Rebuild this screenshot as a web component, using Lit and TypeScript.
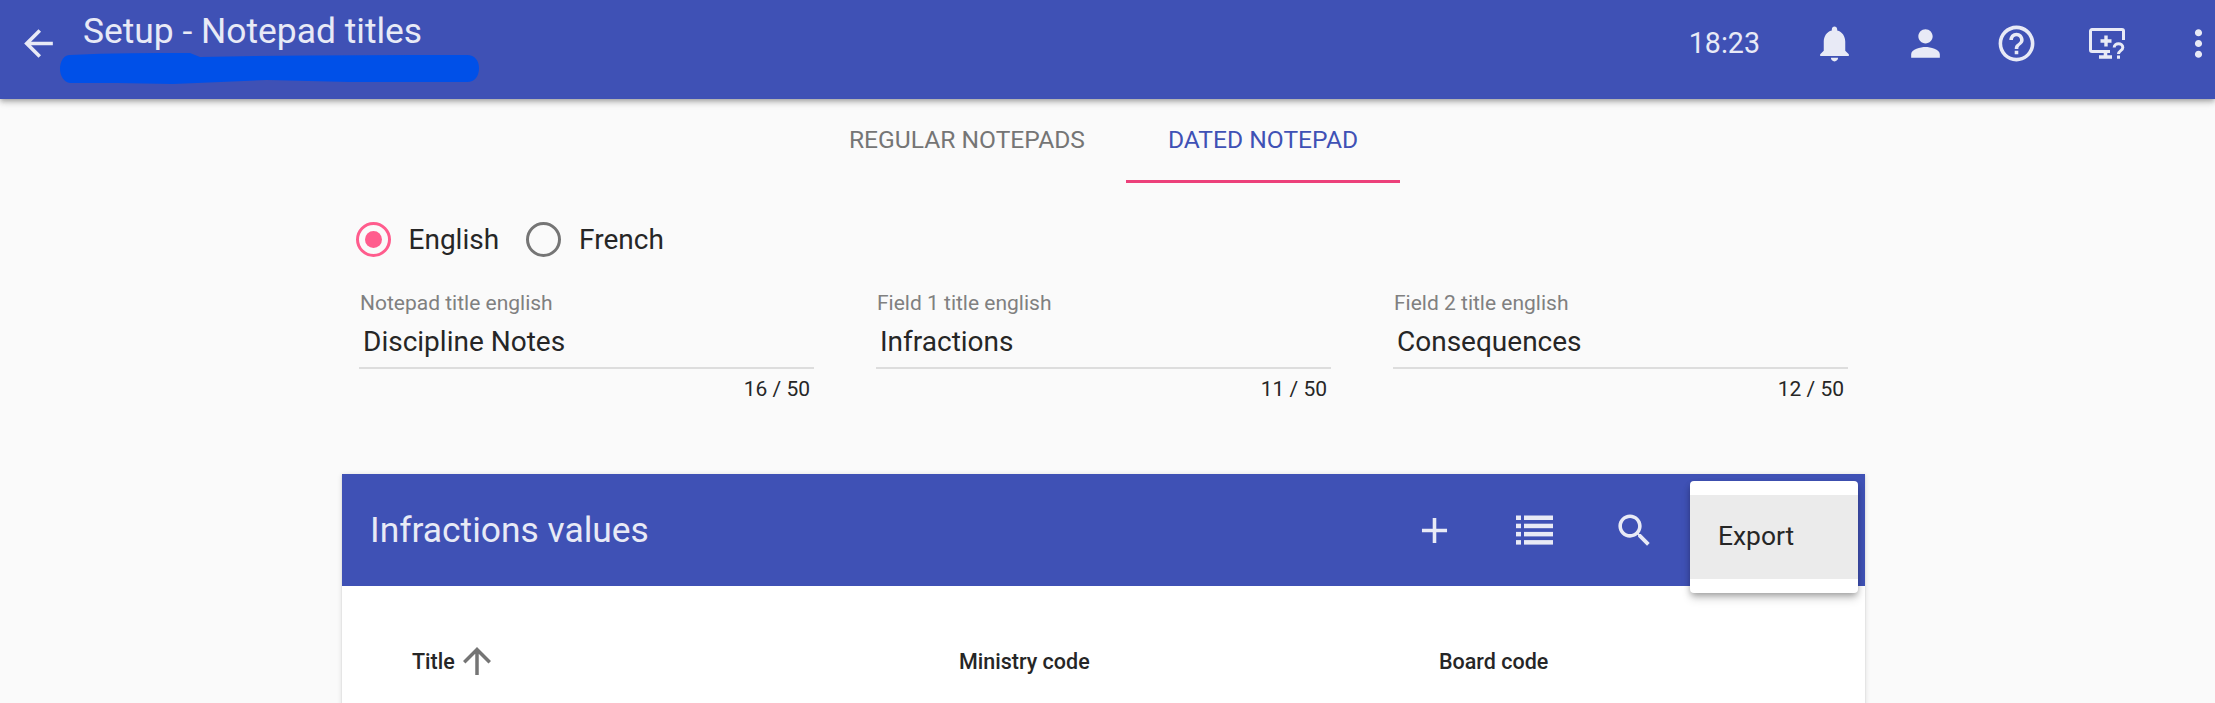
import { css, html, LitElement, svg } from "lit";
import { customElement } from "lit/decorators.js";

const icon = (d: string, cls = "icon") =>
  html`<svg class=${cls} viewBox="0 0 24 24"><path d=${d} fill="currentColor"></path></svg>`;

const ICONS = {
  back: "M20 11H7.83l5.59-5.59L12 4l-8 8 8 8 1.41-1.41L7.83 13H20v-2z",
  bell: "M12 22c1.1 0 2-.9 2-2h-4c0 1.1.9 2 2 2zm6-6v-5c0-3.07-1.63-5.64-4.5-6.32V4c0-.83-.67-1.5-1.5-1.5s-1.5.67-1.5 1.5v.68C7.64 5.36 6 7.92 6 11v5l-2 2v1h16v-1l-2-2z",
  person:
    "M12 12c2.21 0 4-1.79 4-4s-1.79-4-4-4-4 1.79-4 4 1.79 4 4 4zm0 2c-2.67 0-8 1.34-8 4v2h16v-2c0-2.66-5.33-4-8-4z",
  help: "M11 18h2v-2h-2v2zm1-16C6.48 2 2 6.48 2 12s4.48 10 10 10 10-4.48 10-10S17.52 2 12 2zm0 18c-4.41 0-8-3.59-8-8s3.59-8 8-8 8 3.59 8 8-3.59 8-8 8zm0-14c-2.21 0-4 1.79-4 4h2c0-1.1.9-2 2-2s2 .9 2 2c0 2-3 1.75-3 5h2c0-2.25 3-2.5 3-5 0-2.21-1.79-4-4-4z",
  more: "M12 8c1.1 0 2-.9 2-2s-.9-2-2-2-2 .9-2 2 .9 2 2 2zm0 2c-1.1 0-2 .9-2 2s.9 2 2 2 2-.9 2-2-.9-2-2-2zm0 6c-1.1 0-2 .9-2 2s.9 2 2 2 2-.9 2-2-.9-2-2-2z",
  add: "M19 13h-6v6h-2v-6H5v-2h6V5h2v6h6v2z",
  search:
    "M15.5 14h-.79l-.28-.27C15.41 12.59 16 11.11 16 9.5 16 5.91 13.09 3 9.5 3S3 5.91 3 9.5 5.91 16 9.5 16c1.61 0 3.09-.59 4.23-1.57l.27.28v.79l5 4.99L20.49 19l-4.99-5zm-6 0C7.01 14 5 11.99 5 9.5S7.01 5 9.5 5 14 7.01 14 9.5 11.99 14 9.5 14z",
  up: "M4 12l1.41 1.41L11 7.83V20h2V7.83l5.58 5.59L20 12l-8-8-8 8z",
};

const FIELDS = [
  { label: "Notepad title english", value: "Discipline Notes", count: "16 / 50" },
  { label: "Field 1 title english", value: "Infractions", count: "11 / 50" },
  { label: "Field 2 title english", value: "Consequences", count: "12 / 50" },
];

@customElement("app-root")
class AppRoot extends LitElement {
  protected render() {
    return html`
      <header class="appbar">
        ${icon(ICONS.back, "icon back")}
        <h1 class="title">Setup - Notepad titles</h1>
        <svg class="scribble" viewBox="60 53 420 31">
          <path
            d="M70 55C110 53 150 53 190 53L200 57C290 55 380 55 467 55C475 55 479 61 479 68C479 76 475 82 467 82L350 82L267 80L173 84L117 83L70 83C64 82 60 76 60 69C60 61 64 55 70 55Z"
            fill="#0050e8"
          ></path>
        </svg>
        <span class="time">18:23</span>
        <div class="actions">
          ${icon(ICONS.bell)} ${icon(ICONS.person)} ${icon(ICONS.help)}
          <svg class="monitor" viewBox="0 0 36 31" fill="none" stroke="currentColor">
            ${svg`<path d="M21 23.5H3a1.5 1.5 0 0 1-1.5-1.5V3A1.5 1.5 0 0 1 3 1.5h30A1.5 1.5 0 0 1 34.5 3v9" stroke-width="3"></path>
            <path d="M17 7.5v11M11.5 13h11" stroke-width="3.4"></path>
            <path d="M16.5 24v4M10 29h13" stroke-width="3.6"></path>
            <path d="M25.2 19.5c0-5 8.6-5 8.6 0 0 3.3-4.3 3-4.3 6.6M29.5 27.5v3.3" stroke-width="3"></path>`}
          </svg>
          ${icon(ICONS.more)}
        </div>
      </header>

      <main class="page">
        <nav class="tabs">
          <span class="tab">REGULAR NOTEPADS</span>
          <span class="tab active">DATED NOTEPAD</span>
        </nav>

        <section class="form">
          <div class="radios">
            <span class="radio on"><i></i></span><span class="radio-label">English</span>
            <span class="radio"><i></i></span><span class="radio-label">French</span>
          </div>
          <div class="fields">
            ${FIELDS.map(
              (f) => html`<div class="field">
                <label>${f.label}</label>
                <div class="value">${f.value}</div>
                <div class="count">${f.count}</div>
              </div>`
            )}
          </div>
        </section>

        <section class="card">
          <div class="toolbar">
            <h2>Infractions values</h2>
            <div class="tools">
              ${icon(ICONS.add, "icon")}
              <svg class="icon" viewBox="-3 -6.5 43 43" fill="currentColor">
                ${svg`<rect x="0" y="0" width="5" height="4.5"></rect>
                <rect x="8" y="0" width="29" height="4.5"></rect>
                <rect x="0" y="8.2" width="5" height="4.5"></rect>
                <rect x="8" y="8.2" width="29" height="4.5"></rect>
                <rect x="0" y="16.4" width="5" height="4.5"></rect>
                <rect x="8" y="16.4" width="29" height="4.5"></rect>
                <rect x="0" y="24.6" width="5" height="4.5"></rect>
                <rect x="8" y="24.6" width="29" height="4.5"></rect>`}
              </svg>
              ${icon(ICONS.search, "icon")}
            </div>
            <div class="menu"><div class="menu-item">Export</div></div>
          </div>
          <div class="thead">
            <span class="th first">Title ${icon(ICONS.up, "sort")}</span>
            <span class="th second">Ministry code</span>
            <span class="th third">Board code</span>
          </div>
        </section>
      </main>
    `;
  }

  static styles = css`
    :host {
      display: block;
      height: 703px;
      overflow: hidden;
      background: #fafafa;
      font-family: Roboto, sans-serif;
      color: #262626;
    }

    .appbar {
      position: relative;
      z-index: 2;
      display: flex;
      align-items: flex-start;
      height: 99px;
      padding-left: 17px;
      background: #3f51b5;
      color: #e8eaf6;
      box-shadow: 0 2px 4px -1px rgba(0, 0, 0, 0.2), 0 4px 5px rgba(0, 0, 0, 0.14),
        0 1px 10px rgba(0, 0, 0, 0.12);
    }

    .icon {
      width: 43px;
      height: 43px;
      display: block;
      flex: none;
    }

    .back {
      margin-top: 22px;
    }

    .title {
      margin: 10px 0 0 23px;
      font-size: 35.4px;
      line-height: 42px;
      font-weight: 400;
      white-space: nowrap;
    }

    .scribble {
      position: absolute;
      left: 60px;
      top: 53px;
      width: 420px;
      height: 31px;
    }

    .time {
      margin-left: auto;
      margin-top: 26px;
      font-size: 28.6px;
      line-height: 34px;
    }

    .actions {
      display: grid;
      grid-template-columns: repeat(5, 43px);
      column-gap: 48px;
      justify-items: center;
      align-items: center;
      margin: 22px -4.5px 0 52.5px;
    }

    .monitor {
      width: 36px;
      height: 31px;
      display: block;
    }

    .page {
      padding: 0 350px 0 342px;
    }

    .tabs {
      display: flex;
      justify-content: center;
    }

    .tab {
      height: 84px;
      box-sizing: border-box;
      padding: 0 41.5px;
      display: flex;
      align-items: center;
      font-size: 24.6px;
      color: #757575;
      border-bottom: 3px solid transparent;
    }

    .tab.active {
      color: #3f51b5;
      border-bottom-color: #ec407a;
    }

    .form {
      padding: 0 17px;
    }

    .radios {
      display: flex;
      align-items: center;
      margin: 38px 0 0 -3.5px;
      height: 36px;
    }

    .radio {
      width: 35px;
      height: 35px;
      box-sizing: border-box;
      border: 3px solid #757575;
      border-radius: 50%;
      display: flex;
      align-items: center;
      justify-content: center;
      flex: none;
    }

    .radio.on {
      border-color: #ff5c8d;
    }

    .radio.on i {
      width: 17px;
      height: 17px;
      border-radius: 50%;
      background: #ff5c8d;
    }

    .radio-label {
      font-size: 28px;
      margin: 0 27px 0 18px;
    }

    .fields {
      display: grid;
      grid-template-columns: repeat(3, 455px);
      column-gap: 62px;
      margin-top: 34px;
    }

    .field {
      display: flex;
      flex-direction: column;
    }

    .field label {
      font-size: 21px;
      line-height: 24px;
      color: #808080;
      padding-left: 1px;
    }

    .value {
      font-size: 28px;
      line-height: 34px;
      padding: 10px 0 8px 4px;
      border-bottom: 2px solid #ddd;
    }

    .count {
      font-size: 21px;
      line-height: 24px;
      text-align: right;
      padding: 8px 4px 0 0;
    }

    .card {
      margin-top: 73px;
      background: #fff;
      height: 260px;
      box-shadow: 0 2px 1px -1px rgba(0, 0, 0, 0.2), 0 1px 1px rgba(0, 0, 0, 0.14),
        0 1px 5px rgba(0, 0, 0, 0.14);
    }

    .toolbar {
      position: relative;
      display: flex;
      align-items: center;
      height: 112px;
      padding-left: 28px;
      background: #3f51b5;
      color: #e8eaf6;
    }

    .toolbar h2 {
      margin: 0;
      font-size: 35.4px;
      font-weight: 400;
      flex: 1;
    }

    .tools {
      display: flex;
      gap: 57px;
      margin-right: 209px;
    }

    .menu {
      position: absolute;
      top: 7px;
      right: 7px;
      width: 168px;
      height: 112px;
      box-sizing: border-box;
      padding: 14px 0;
      background: #fff;
      border-radius: 4px;
      box-shadow: 0 3px 6px -1px rgba(0, 0, 0, 0.3), 0 6px 10px rgba(0, 0, 0, 0.14);
      color: #262626;
    }

    .menu-item {
      height: 84px;
      display: flex;
      align-items: center;
      padding-left: 28px;
      background: #ebebeb;
      font-size: 26.4px;
      padding-bottom: 2px;
      box-sizing: border-box;
    }

    .thead {
      display: flex;
      align-items: center;
      padding-top: 55px;
      height: 40px;
      font-size: 21.5px;
      font-weight: 500;
    }

    .th {
      display: flex;
      align-items: center;
      white-space: nowrap;
    }

    .first {
      margin-left: 70px;
      width: 547px;
    }

    .second {
      width: 480px;
    }

    .sort {
      width: 42px;
      height: 42px;
      margin-left: 1px;
      color: #757575;
    }
  `;
}

declare global {
  interface HTMLElementTagNameMap {
    "app-root": AppRoot;
  }
}
